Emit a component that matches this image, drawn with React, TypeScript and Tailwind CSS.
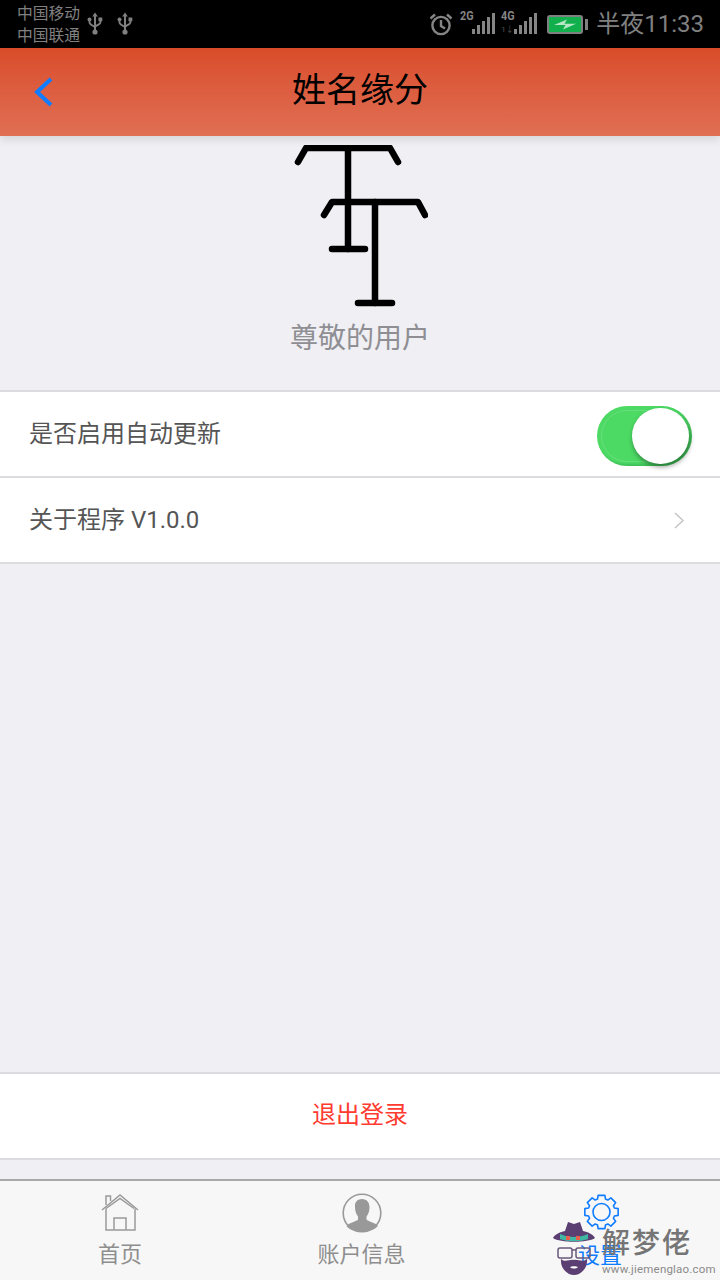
const cjk = "font-['Roboto','Noto_Sans_CJK_SC',sans-serif]";

// 8 tooth cog, outline only
function gearPath(cx: number, cy: number, outer: number, inner: number) {
  const pts: string[] = [];
  for (let i = 0; i < 8; i++) {
    const a = (i * Math.PI) / 4;
    const at = (r: number, d: number) =>
      `${(cx + r * Math.cos(a + d)).toFixed(2)} ${(cy + r * Math.sin(a + d)).toFixed(2)}`;
    pts.push(at(inner, -0.3), at(outer, -0.2), at(outer, 0.2), at(inner, 0.3));
  }
  return `M${pts.join("L")}Z`;
}

function UsbIcon() {
  return (
    <svg width="16" height="24" viewBox="0 0 16 24" fill="#808080">
      <path d="M8 0.500l2.800 4H5.200z" />
      <path d="M8 4v16" stroke="#808080" strokeWidth="2" />
      <circle cx="8" cy="20" r="2.600" />
      <path d="M2.500 8v2.500c0 2 3 2.800 5.500 4.500" fill="none" stroke="#808080" strokeWidth="1.800" />
      <circle cx="2.500" cy="7.500" r="2" />
      <rect x="11.500" y="5.500" width="3.800" height="3.800" />
      <path d="M13.400 9v1.500c0 1.500 -3 2.500 -5.400 4" fill="none" stroke="#808080" strokeWidth="1.800" />
    </svg>
  );
}

function Signal({ label, sub, width }: { label: string; sub?: boolean; width: string }) {
  const bars = ["h-[5px]", "h-[9px]", "h-[13px]", "h-[17px]", "h-[21px]"];
  return (
    <div className={`relative mb-[4px] flex h-[24px] items-end justify-end gap-[2px] ${width}`}>
      <span className="absolute top-[-1px] left-0 origin-left scale-x-90 font-['Roboto',sans-serif] text-[12px] leading-[14px] font-bold text-[#858585]">
        {label}
      </span>
      {sub && (
        <span className="absolute bottom-[-1px] left-0 text-[8px] leading-[10px] text-[#555]">
          1↓
        </span>
      )}
      {bars.map((h, i) => (
        <span key={i} className={`w-[3px] bg-[#858585] ${h}`} />
      ))}
    </div>
  );
}

function StatusBar() {
  return (
    <div className={`flex h-[48px] shrink-0 items-center bg-black pr-[16px] pl-[17px] text-[#808080] ${cjk}`}>
      <div className="w-[63px] pt-[2px] text-[15.750px] leading-[22px] whitespace-nowrap">
        <div>中国移动</div>
        <div>中国联通</div>
      </div>
      <div className="ml-[7px] flex gap-[14px]">
        <UsbIcon />
        <UsbIcon />
      </div>
      <div className="ml-auto flex items-center">
        <svg width="24" height="24" viewBox="0 0 24 24" fill="none" stroke="#858585" strokeWidth="2.400">
          <circle cx="12" cy="13.500" r="8.600" />
          <path d="M12 8V14L16 16.500" />
          <path d="M1.500 6.500L6 2.500M22.500 6.500L18 2.500" />
        </svg>
        <div className="ml-[7px] flex gap-[6px]">
          <Signal label="2G" width="w-[35px]" />
          <Signal label="4G" sub width="w-[36px]" />
        </div>
        <div className="ml-[10px] flex items-center">
          <div className="flex h-[19px] w-[36px] items-center justify-center rounded-[3px] border-2 border-[#808080] bg-[#12b04c]">
            <svg width="22" height="11" viewBox="0 0 22 11" fill="#b5e6c6">
              <path d="M0 6L13 0.500 10.500 4.800H22L9 10.500 11.500 6z" />
            </svg>
          </div>
          <div className="ml-[2px] h-[11px] w-[3px] bg-[#808080]" />
        </div>
        <span className="ml-[8px] text-[24px] leading-[30px] whitespace-nowrap">半夜11:33</span>
      </div>
    </div>
  );
}

function Avatar() {
  return (
    <svg width="136" height="162" viewBox="0 0 136 162" fill="none" stroke="#000" strokeWidth="6.500" strokeLinecap="round" strokeLinejoin="round">
      <path d="M6 17L14 3H98L106 17" />
      <path d="M56 3V104" />
      <path d="M40 104H73" />
      <path d="M32 70L40 57H126L133 70" />
      <path d="M83 57V158" />
      <path d="M66 158H100" />
    </svg>
  );
}

function Toggle() {
  return (
    <div className="relative mt-[4px] h-[60px] w-[95px] rounded-full bg-[#4cd964] shadow-[inset_-2px_-2px_2px_rgba(0,90,40,0.18)]">
      <div className="absolute inset-[4px] rounded-full border border-white/15" />
      <div className="absolute top-[2px] right-[3px] h-[56px] w-[57px] rounded-full bg-white shadow-[1px_3px_5px_rgba(0,0,0,0.4)]" />
    </div>
  );
}

function TabBar() {
  return (
    <div className="relative flex h-[101px] shrink-0 border-t-2 border-[#a9a9a9] bg-[#f7f7f7] pt-[12px]">
      <div className="flex w-[240px] flex-col items-center">
        <svg width="38" height="38" viewBox="0 0 38 38" fill="none" stroke="#9a9a9a" strokeWidth="1.500">
          <path d="M1 17L19 2L37 17" />
          <path d="M5 15.500L19 5.500L33 15.500" />
          <path d="M5 12V3H9.500V8" />
          <path d="M5 15.500V37H34V15.500" />
          <path d="M13 37V25H25V37" />
        </svg>
        <span className="mt-[8px] text-[22px] leading-[32px] text-[#8e8e8e]">首页</span>
      </div>
      <div className="flex w-[240px] flex-col items-center pl-[3px]">
        <svg width="40" height="40" viewBox="0 0 40 40">
          <circle cx="20" cy="20" r="18.800" fill="#f7f7f7" stroke="#999" strokeWidth="1.600" />
          <path
            d="M20 6c5 0 7.500 3.500 7.500 8.500 0 3 -1 6.500 -3 9v3c1 2 9 3 11.500 6.500C32 37 26.500 39 20 39S8 37 4.500 33c2.500 -3.500 10.500 -4.500 11.500 -6.500v-3c-2 -2.500 -3 -6 -3 -9C12.500 9.500 15 6 20 6z"
            fill="#999"
          />
        </svg>
        <span className="mt-[6px] text-[22px] leading-[32px] text-[#8e8e8e]">账户信息</span>
      </div>
      <div className="flex w-[240px] flex-col items-center">
        <svg className="ml-[2px] mt-[1px]" width="37" height="36" viewBox="0 0 37 36" fill="none" stroke="#107cff" strokeWidth="1.600" strokeLinejoin="round">
          <circle cx="18.500" cy="18" r="8.500" />
          <path d={gearPath(18.5, 18, 17, 13.5)} />
        </svg>
        <span className="mt-[10px] text-[22px] leading-[32px] text-[#107cff]">设置</span>
      </div>
      {/* site watermark */}
      <div className="absolute top-[40px] left-[552px] h-[60px] w-[168px]">
        <svg className="absolute top-0 left-0" width="44" height="56" viewBox="0 0 44 56">
          <path d="M13 10L16 1 22 3 28 1 31 10C36 11 42 14 43 17 36 22 8 22 1 17 2 14 8 11 13 10z" fill="#5b3f73" />
          <path d="M8 13C16 17 28 17 36 13L36 18C28 21 16 21 8 18z" fill="#3fb7a5" />
          <path d="M14 15h4v4h-4zM24 15h4v4h-4z" fill="#e8604c" />
          <rect x="6" y="27" width="14" height="10" rx="2" fill="none" stroke="#6a5a7a" strokeWidth="1.500" />
          <rect x="24" y="27" width="14" height="10" rx="2" fill="none" stroke="#6a5a7a" strokeWidth="1.500" />
          <path d="M20 29h4" stroke="#6a5a7a" strokeWidth="1.500" />
          <path d="M9 38C13 42 18 38 22 39 26 38 31 42 35 38 36 47 29 54 22 54 15 54 8 47 9 38z" fill="#5b3f73" />
          <path d="M18 46C20 45 24 45 26 46 24 48 20 48 18 46z" fill="#fff" />
        </svg>
        <span className="absolute top-[5px] left-[50px] text-[28px] leading-[36px] font-medium tracking-[2px] whitespace-nowrap text-[#757575]">解梦佬</span>
        <span className="absolute top-[40px] left-[50px] text-[11.500px] leading-[16px] tracking-[0.2px] whitespace-nowrap text-[#8a8a8a]">www.jiemenglao.com</span>
      </div>
    </div>
  );
}

export default function App() {
  return (
    <div className={`flex h-[1280px] w-[720px] flex-col overflow-hidden bg-[#efeff4] ${cjk}`}>
      <StatusBar />
      <div className="relative flex h-[88px] shrink-0 items-center justify-center bg-gradient-to-b from-[#d94c2a] to-[#e06f54] pb-[5px] shadow-[0_4px_8px_rgba(0,0,0,0.1)]">
        <svg className="absolute top-[29px] left-[33px]" width="20" height="30" viewBox="0 0 20 30" fill="none" stroke="#107cff" strokeWidth="4">
          <path d="M18 2L4 15L18 28" />
        </svg>
        <span className="text-[34px] leading-[44px] text-black">姓名缘分</span>
      </div>
      <div className="flex h-[254px] shrink-0 flex-col items-center pt-[9px]">
        <Avatar />
        <span className="mt-[13px] text-[28px] leading-[38px] text-[#8e8e93]">尊敬的用户</span>
      </div>
      <div className="flex h-[88px] shrink-0 items-center justify-between border-y-2 border-[#dcdce0] bg-white pr-[28px] pl-[29px]">
        <span className="text-[24px] text-[#555]">是否启用自动更新</span>
        <Toggle />
      </div>
      <div className="flex h-[86px] shrink-0 items-center justify-between border-b-2 border-[#dcdce0] bg-white pr-[36px] pl-[29px]">
        <span className="text-[24px] text-[#555]">关于程序 V1.0.0</span>
        <svg width="10" height="17" viewBox="0 0 10 17" fill="none" stroke="#c4c4c6" strokeWidth="1.500">
          <path d="M1 1L9 8.500L1 16" />
        </svg>
      </div>
      <div className="flex-1" />
      <div className="mb-[19px] flex h-[88px] shrink-0 items-center justify-center border-y-2 border-[#dcdce0] bg-white pb-[3px]">
        <span className="text-[24px] text-[#ff3b30]">退出登录</span>
      </div>
      <TabBar />
    </div>
  );
}
